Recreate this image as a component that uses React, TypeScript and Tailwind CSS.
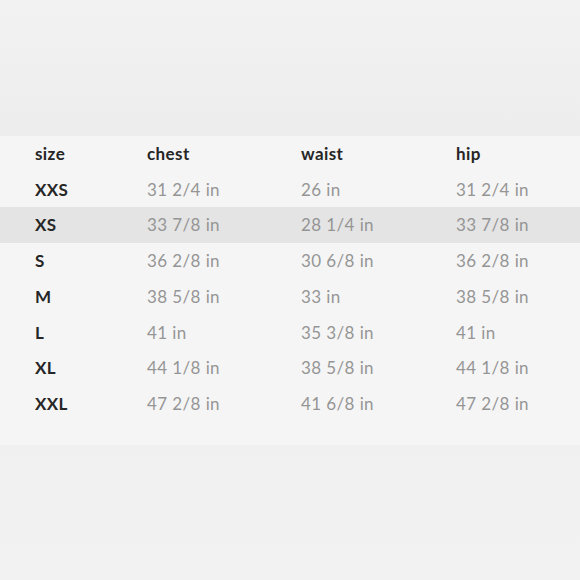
import React from 'react';

const ROWS = [
  { size: 'XXS', chest: '31 2/4 in', waist: '26 in', hip: '31 2/4 in' },
  { size: 'XS', chest: '33 7/8 in', waist: '28 1/4 in', hip: '33 7/8 in' },
  { size: 'S', chest: '36 2/8 in', waist: '30 6/8 in', hip: '36 2/8 in' },
  { size: 'M', chest: '38 5/8 in', waist: '33 in', hip: '38 5/8 in' },
  { size: 'L', chest: '41 in', waist: '35 3/8 in', hip: '41 in' },
  { size: 'XL', chest: '44 1/8 in', waist: '38 5/8 in', hip: '44 1/8 in' },
  { size: 'XXL', chest: '47 2/8 in', waist: '41 6/8 in', hip: '47 2/8 in' },
];

const GRID = 'grid grid-cols-[112px_154px_155px_1fr] pl-[35px] h-[35.7px] items-center';

export default function App() {
  return (
    <div
      className="w-[580px] h-[580px] flex flex-col bg-[#f0f0f0]"
      style={{ fontFamily: 'Lato, "Open Sans", sans-serif' }}
    >
      <div className="h-[136px] bg-gradient-to-b from-[#f2f2f2] to-[#ededed]" />

      {/* Size table */}
      <div className="bg-[#f5f5f5] pb-[23px] text-[17px] tracking-[0.4px]">
        <div className={`${GRID} font-bold text-[#262626]`}>
          <span>size</span>
          <span>chest</span>
          <span>waist</span>
          <span>hip</span>
        </div>
        {ROWS.map(r => (
          <div key={r.size} className={`${GRID} ${r.size === 'XS' ? 'bg-[#e4e4e4]' : ''}`}>
            <span className="font-bold text-[#262626]">{r.size}</span>
            <span className="text-[#959595]">{r.chest}</span>
            <span className="text-[#959595]">{r.waist}</span>
            <span className="text-[#959595]">{r.hip}</span>
          </div>
        ))}
      </div>

      <div className="flex-1 bg-gradient-to-b from-[#f0f0f0] to-[#f2f2f2]" />
    </div>
  );
}
